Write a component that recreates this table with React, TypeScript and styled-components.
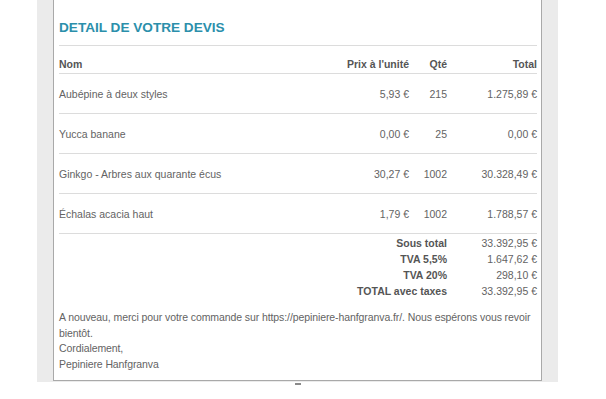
import React from "react";
import styled, { createGlobalStyle } from "styled-components";

type Line = {
  name: string;
  price: string;
  qty: string;
  total: string;
};

const lines: Line[] = [
  { name: "Aubépine à deux styles", price: "5,93 €", qty: "215", total: "1.275,89 €" },
  { name: "Yucca banane", price: "0,00 €", qty: "25", total: "0,00 €" },
  { name: "Ginkgo - Arbres aux quarante écus", price: "30,27 €", qty: "1002", total: "30.328,49 €" },
  { name: "Échalas acacia haut", price: "1,79 €", qty: "1002", total: "1.788,57 €" },
];

const totals = [
  { label: "Sous total", value: "33.392,95 €" },
  { label: "TVA 5,5%", value: "1.647,62 €" },
  { label: "TVA 20%", value: "298,10 €" },
  { label: "TOTAL avec taxes", value: "33.392,95 €" },
];

const GlobalStyle = createGlobalStyle`
  body {
    margin: 0;
    background: #fff;
    font-family: "Liberation Sans", Arial, sans-serif;
  }
`;

const Page = styled.div`
  display: flex;
  flex-direction: column;
  align-items: center;
  width: 521px;
  margin-left: 37px;
`;

const Backdrop = styled.div`
  width: 100%;
  box-sizing: border-box;
  background: #ebebeb;
  padding: 0 16px 1px;
`;

const Card = styled.div`
  background: #fff;
  border: 1px solid #a9a9a9;
  border-top: 0;
  padding: 20px 4px 8px 5px;
  color: #636363;
  font-size: 10.5px;
`;

const Title = styled.h2`
  margin: 0;
  padding-bottom: 9px;
  border-bottom: 1px solid #dcdcdc;
  color: #2b8fab;
  font-size: 13.6px;
  line-height: 16px;
  font-weight: bold;
`;

const Row = styled.div<{ $head?: boolean }>`
  display: grid;
  grid-template-columns: 1fr 90px 38px 90px;
  align-items: ${(p) => (p.$head ? "end" : "center")};
  height: ${(p) => (p.$head ? "24px" : "39px")};
  padding-bottom: ${(p) => (p.$head ? "3px" : "0")};
  border-bottom: 1px solid #dcdcdc;
  font-weight: ${(p) => (p.$head ? "bold" : "normal")};
  color: ${(p) => (p.$head ? "#555" : "#636363")};
`;

const Cell = styled.span<{ $right?: boolean }>`
  text-align: ${(p) => (p.$right ? "right" : "left")};
  white-space: nowrap;
`;

const Totals = styled.div`
  display: grid;
  grid-template-columns: 1fr 90px;
  grid-auto-rows: 16px;
  align-items: center;
  padding-top: 1px;
`;

const TotalLabel = styled.span`
  text-align: right;
  font-weight: bold;
  color: #555;
`;

const TotalValue = styled.span`
  text-align: right;
`;

const Closing = styled.div`
  margin-top: 11px;
  line-height: 15.5px;
  letter-spacing: -0.09px;
`;

const Tick = styled.span`
  display: block;
  width: 6px;
  height: 2px;
  margin-top: 1px;
  background: #8a8a8a;
`;

export default function App() {
  return (
    <>
      <GlobalStyle />
      <Page>
        <Backdrop>
          <Card>
            <Title>DETAIL DE VOTRE DEVIS</Title>
            <Row $head>
              <Cell>Nom</Cell>
              <Cell $right>Prix à l'unité</Cell>
              <Cell $right>Qté</Cell>
              <Cell $right>Total</Cell>
            </Row>
            {lines.map((l) => (
              <Row key={l.name}>
                <Cell>{l.name}</Cell>
                <Cell $right>{l.price}</Cell>
                <Cell $right>{l.qty}</Cell>
                <Cell $right>{l.total}</Cell>
              </Row>
            ))}
            <Totals>
              {totals.map((t) => (
                <React.Fragment key={t.label}>
                  <TotalLabel>{t.label}</TotalLabel>
                  <TotalValue>{t.value}</TotalValue>
                </React.Fragment>
              ))}
            </Totals>
            <Closing>
              A nouveau, merci pour votre commande sur https://pepiniere-hanfgranva.fr/. Nous espérons vous revoir bientôt.
              <br />
              Cordialement,
              <br />
              Pepiniere Hanfgranva
            </Closing>
          </Card>
        </Backdrop>
        <Tick />
      </Page>
    </>
  );
}
